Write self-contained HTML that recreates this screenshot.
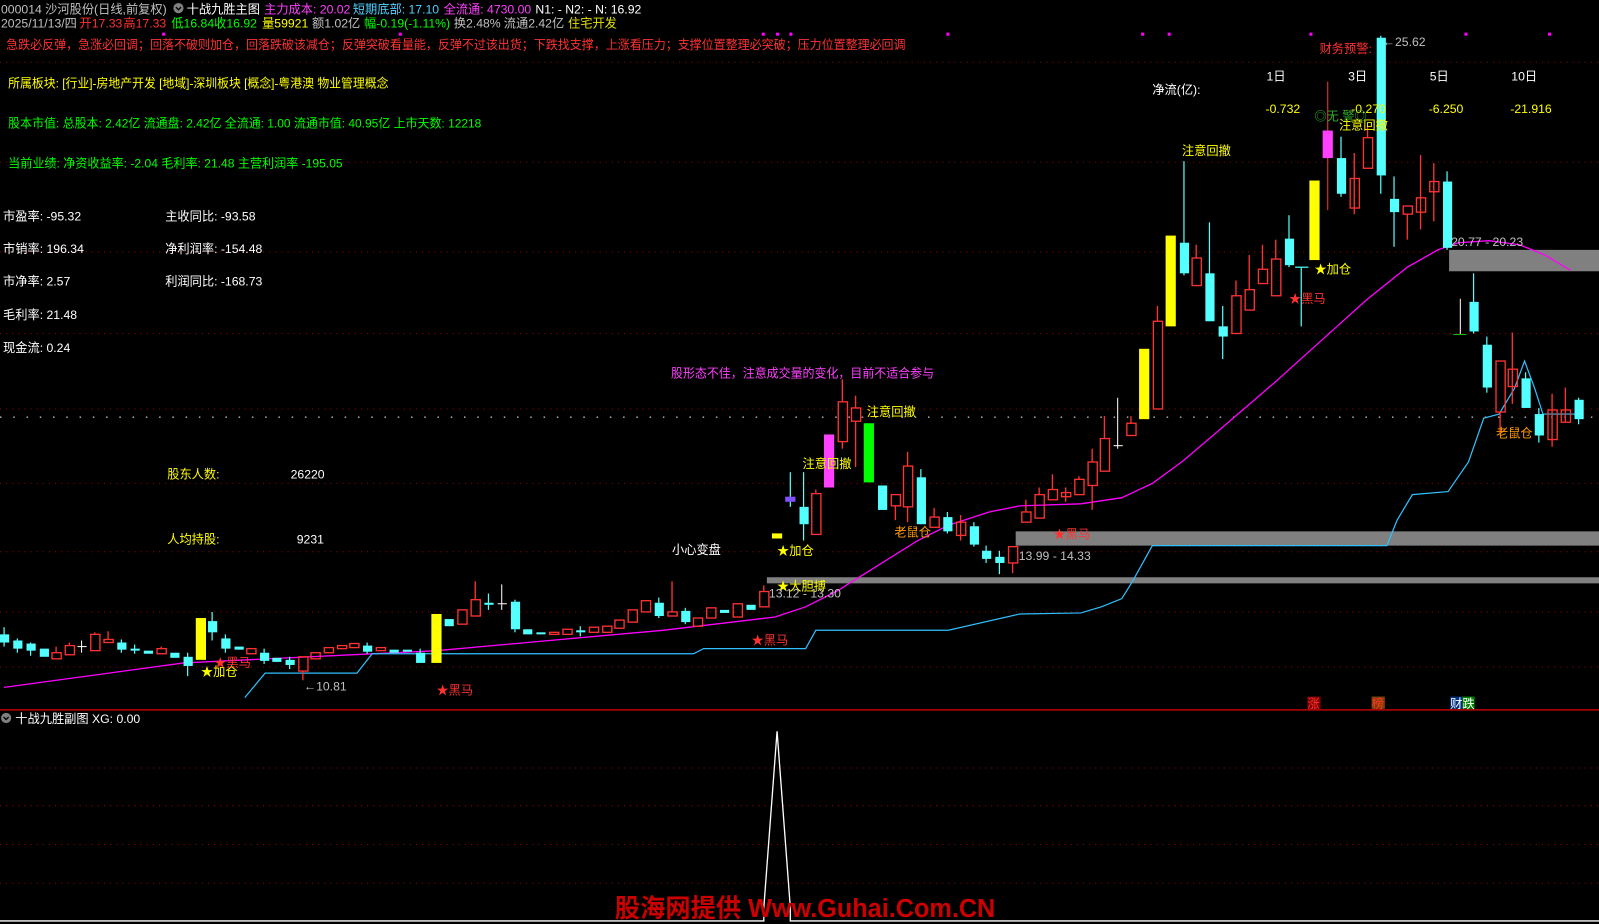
<!DOCTYPE html>
<html><head><meta charset="utf-8"><style>
html,body{margin:0;padding:0;background:#000;overflow:hidden}
svg{display:block}
text{font-family:"Liberation Sans","Noto Sans CJK SC","WenQuanYi Zen Hei",sans-serif;font-size:12px}
.w{fill:#fff}.g{fill:#c0c0c0}.r{fill:#ff3232}.y{fill:#ffff00}.m{fill:#ff40ff}.c{fill:#50d0ff}.gr{fill:#00ff00}.o{fill:#ff9900}
.rc line,.rc rect{stroke:#ff3232;fill:none;stroke-width:1.3}
.cc line{stroke:#54ffff;stroke-width:1.2}.cc rect{fill:#54ffff}
</style></head><body>
<svg width="1599" height="924" viewBox="0 0 1568 906" preserveAspectRatio="none" xmlns="http://www.w3.org/2000/svg">
<rect width="1568" height="906" fill="#000"/>
<g stroke="#a00000" stroke-dasharray="1 5" stroke-width="1">
<line x1="0" y1="61" x2="1568" y2="61"/><line x1="0" y1="159" x2="1568" y2="159"/><line x1="0" y1="247" x2="1568" y2="247"/><line x1="0" y1="327" x2="1568" y2="327"/><line x1="0" y1="401" x2="1568" y2="401"/><line x1="0" y1="474" x2="1568" y2="474"/><line x1="0" y1="541" x2="1568" y2="541"/><line x1="0" y1="600" x2="1568" y2="600"/><line x1="0" y1="654" x2="1568" y2="654"/>
<line x1="0" y1="753" x2="1568" y2="753"/><line x1="0" y1="790" x2="1568" y2="790"/><line x1="0" y1="828" x2="1568" y2="828"/><line x1="0" y1="866" x2="1568" y2="866"/>
</g>
<line x1="0" y1="409" x2="1568" y2="409" stroke="#fff" stroke-dasharray="1.5 11.5"/>
<line x1="0" y1="696" x2="1568" y2="696" stroke="#c00000" stroke-width="1.5"/>
<g fill="#808080"><rect x="1421" y="245" width="147" height="21"/><rect x="996" y="521" width="572" height="14"/><rect x="752" y="566" width="816" height="6"/></g>
<g fill="#ff00ff"><rect x="159" y="32" width="3" height="3"/><rect x="391" y="32" width="3" height="3"/><rect x="747" y="32" width="3" height="3"/><rect x="761" y="32" width="3" height="3"/><rect x="774" y="32" width="3" height="3"/><rect x="928" y="32" width="3" height="3"/><rect x="1119" y="32" width="3" height="3"/><rect x="1145" y="32" width="3" height="3"/><rect x="1284" y="32" width="3" height="3"/><rect x="1436" y="32" width="3" height="3"/><rect x="1518" y="32" width="3" height="3"/></g>
<polyline fill="none" stroke="#ff00ff" stroke-width="1.3" points="4,674 180,650 428,638 650,618 760,605 790,595 820,580 860,555 900,530 930,515 970,502 1000,496 1060,494 1100,488 1130,474 1160,452 1200,418 1250,375 1300,330 1340,294 1380,262 1410,245 1430,238 1460,236 1490,240 1515,250 1540,265"/>
<polyline fill="none" stroke="#30c0ff" stroke-width="1.2" points="240,684 260,660 350,660 365,641 680,641 690,636 790,636 800,618 930,618 1000,602 1060,601 1080,595 1100,587 1110,571 1130,535 1360,535 1370,510 1385,485 1420,482 1440,453 1455,410 1470,406 1485,381 1495,354 1505,381 1513,406 1550,406"/>
<g class="cc">
<line x1="4" y1="615" x2="4" y2="634"/><rect x="0" y="622" width="9" height="8"/>
<line x1="17" y1="626" x2="17" y2="640"/><rect x="13" y="628" width="9" height="8"/>
<line x1="30" y1="630" x2="30" y2="643"/><rect x="26" y="631" width="9" height="7"/>
<rect x="39" y="636" width="9" height="8"/>
<line x1="119" y1="627" x2="119" y2="640"/><rect x="115" y="630" width="9" height="7"/>
<line x1="132" y1="632" x2="132" y2="641"/><rect x="128" y="636" width="9" height="2"/>
<rect x="141" y="638" width="9" height="3"/>
<rect x="167" y="640" width="9" height="5"/>
<line x1="184" y1="640" x2="184" y2="663"/><rect x="180" y="644" width="9" height="9"/>
<line x1="208" y1="600" x2="208" y2="628"/><rect x="204" y="609" width="9" height="11"/>
<line x1="221" y1="622" x2="221" y2="640"/><rect x="217" y="626" width="9" height="10"/>
<rect x="230" y="634" width="9" height="3"/>
<line x1="259" y1="636" x2="259" y2="651"/><rect x="255" y="640" width="9" height="8"/>
<rect x="267" y="645" width="9" height="4"/>
<line x1="284" y1="644" x2="284" y2="656"/><rect x="280" y="647" width="9" height="5"/>
<line x1="360" y1="630" x2="360" y2="641"/><rect x="356" y="633" width="9" height="6"/>
<rect x="382" y="637" width="9" height="3"/>
<rect x="395" y="637" width="9" height="2"/>
<line x1="412" y1="636" x2="412" y2="650"/><rect x="408" y="640" width="9" height="10"/>
<rect x="436" y="607" width="9" height="7"/>
<line x1="479" y1="582" x2="479" y2="598"/><rect x="475" y="591" width="9" height="2"/>
<line x1="505" y1="588" x2="505" y2="620"/><rect x="501" y="590" width="9" height="27"/>
<rect x="513" y="617" width="9" height="5"/>
<rect x="526" y="620" width="9" height="2"/>
<line x1="569" y1="614" x2="569" y2="624"/><rect x="565" y="618" width="9" height="2"/>
<line x1="646" y1="586" x2="646" y2="606"/><rect x="642" y="591" width="9" height="13"/>
<line x1="672" y1="596" x2="672" y2="612"/><rect x="668" y="599" width="9" height="11"/>
<rect x="706" y="598" width="9" height="3"/>
<rect x="732" y="593" width="9" height="5"/>
<line x1="788" y1="463" x2="788" y2="530"/><rect x="784" y="497" width="9" height="17"/>
<line x1="775" y1="463" x2="775" y2="497"/>
<rect x="861" y="476" width="9" height="24"/>
<line x1="903" y1="460" x2="903" y2="514"/><rect x="899" y="468" width="9" height="46"/>
<line x1="929" y1="502" x2="929" y2="523"/><rect x="925" y="507" width="9" height="14"/>
<line x1="955" y1="512" x2="955" y2="536"/><rect x="951" y="516" width="9" height="18"/>
<line x1="967" y1="535" x2="967" y2="552"/><rect x="963" y="540" width="9" height="8"/>
<line x1="980" y1="540" x2="980" y2="563"/><rect x="976" y="546" width="9" height="6"/>
<line x1="1161" y1="158" x2="1161" y2="270"/><rect x="1157" y="238" width="9" height="30"/>
<line x1="1186" y1="218" x2="1186" y2="315"/><rect x="1182" y="268" width="9" height="47"/>
<line x1="1199" y1="300" x2="1199" y2="352"/><rect x="1195" y="320" width="9" height="10"/>
<line x1="1264" y1="211" x2="1264" y2="262"/><rect x="1260" y="234" width="9" height="26"/>
<line x1="1276" y1="262" x2="1276" y2="320"/><line x1="1270" y1="262" x2="1283" y2="262"/>
<line x1="1315" y1="134" x2="1315" y2="193"/><rect x="1311" y="155" width="9" height="35"/>
<line x1="1354" y1="35" x2="1354" y2="190"/><rect x="1350" y="37" width="9" height="135"/>
<line x1="1367" y1="173" x2="1367" y2="242"/><rect x="1363" y="195" width="9" height="13"/>
<line x1="1419" y1="168" x2="1419" y2="245"/><rect x="1415" y="178" width="9" height="65"/>
<line x1="1445" y1="268" x2="1445" y2="327"/><rect x="1441" y="296" width="9" height="29"/>
<line x1="1458" y1="330" x2="1458" y2="385"/><rect x="1454" y="338" width="9" height="42"/>
<line x1="1496" y1="365" x2="1496" y2="400"/><rect x="1492" y="371" width="9" height="29"/>
<line x1="1509" y1="400" x2="1509" y2="434"/><rect x="1505" y="406" width="9" height="21"/>
<line x1="1548" y1="390" x2="1548" y2="416"/><rect x="1544" y="392" width="9" height="19"/>
</g>
<g class="rc">
<line x1="55" y1="634" x2="55" y2="640"/><rect x="51" y="640" width="9" height="6"/>
<line x1="68" y1="630" x2="68" y2="633"/><rect x="64" y="633" width="9" height="9"/>
<line x1="93" y1="620" x2="93" y2="622"/><rect x="89" y="622" width="9" height="16"/>
<line x1="106" y1="619" x2="106" y2="627"/><rect x="102" y="627" width="9" height="3"/>
<line x1="158" y1="634" x2="158" y2="636"/><rect x="154" y="636" width="9" height="5"/>
<rect x="242" y="636" width="9" height="5"/>
<line x1="297" y1="658" x2="297" y2="667"/><rect x="293" y="644" width="9" height="14"/>
<rect x="305" y="640" width="9" height="6"/><rect x="318" y="635" width="9" height="5"/><rect x="331" y="633" width="9" height="3"/><rect x="343" y="631" width="9" height="4"/><rect x="369" y="635" width="9" height="3"/>
<rect x="449" y="598" width="9" height="14"/>
<line x1="466" y1="570" x2="466" y2="588"/><rect x="462" y="588" width="9" height="16"/>
<rect x="539" y="620" width="9" height="2"/><rect x="552" y="617" width="9" height="5"/><rect x="578" y="615" width="9" height="5"/><rect x="591" y="614" width="9" height="6"/><rect x="603" y="608" width="9" height="8"/><rect x="616" y="598" width="9" height="12"/><rect x="629" y="589" width="9" height="11"/>
<line x1="659" y1="570" x2="659" y2="600"/><rect x="655" y="600" width="9" height="4"/>
<rect x="680" y="606" width="9" height="8"/><rect x="693" y="596" width="9" height="10"/><rect x="719" y="592" width="9" height="13"/>
<line x1="749" y1="574" x2="749" y2="580"/><rect x="745" y="580" width="9" height="15"/>
<line x1="800" y1="480" x2="800" y2="484"/><rect x="796" y="484" width="9" height="40"/>
<line x1="826" y1="372" x2="826" y2="394"/><line x1="826" y1="433" x2="826" y2="440"/><rect x="822" y="394" width="9" height="39"/>
<line x1="839" y1="388" x2="839" y2="400"/><line x1="839" y1="413" x2="839" y2="458"/><rect x="835" y="400" width="9" height="13"/>
<line x1="878" y1="496" x2="878" y2="510"/><rect x="874" y="485" width="9" height="11"/>
<line x1="890" y1="443" x2="890" y2="457"/><line x1="890" y1="497" x2="890" y2="512"/><rect x="886" y="457" width="9" height="40"/>
<line x1="916" y1="498" x2="916" y2="507"/><rect x="912" y="507" width="9" height="10"/>
<line x1="942" y1="505" x2="942" y2="530"/><rect x="938" y="512" width="9" height="13"/>
<line x1="993" y1="552" x2="993" y2="562"/><rect x="989" y="536" width="9" height="16"/>
<line x1="1006" y1="490" x2="1006" y2="502"/><rect x="1002" y="502" width="9" height="10"/>
<line x1="1019" y1="478" x2="1019" y2="485"/><rect x="1015" y="485" width="9" height="23"/>
<line x1="1032" y1="465" x2="1032" y2="480"/><rect x="1028" y="480" width="9" height="10"/>
<line x1="1045" y1="478" x2="1045" y2="492"/><rect x="1041" y="483" width="9" height="4"/>
<line x1="1058" y1="467" x2="1058" y2="470"/><rect x="1054" y="470" width="9" height="15"/>
<line x1="1071" y1="440" x2="1071" y2="453"/><line x1="1071" y1="476" x2="1071" y2="500"/><rect x="1067" y="453" width="9" height="23"/>
<line x1="1083" y1="408" x2="1083" y2="430"/><rect x="1079" y="430" width="9" height="32"/>
<line x1="1109" y1="408" x2="1109" y2="415"/><rect x="1105" y="415" width="9" height="12"/>
<line x1="1135" y1="300" x2="1135" y2="315"/><rect x="1131" y="315" width="9" height="86"/>
<line x1="1173" y1="240" x2="1173" y2="253"/><rect x="1169" y="253" width="9" height="27"/>
<line x1="1212" y1="275" x2="1212" y2="290"/><rect x="1208" y="290" width="9" height="37"/>
<line x1="1225" y1="250" x2="1225" y2="284"/><rect x="1221" y="284" width="9" height="20"/>
<line x1="1238" y1="240" x2="1238" y2="264"/><rect x="1234" y="264" width="9" height="14"/>
<line x1="1251" y1="235" x2="1251" y2="254"/><rect x="1247" y="254" width="9" height="36"/>
<line x1="1328" y1="150" x2="1328" y2="210"/><rect x="1324" y="175" width="9" height="29"/>
<line x1="1341" y1="123" x2="1341" y2="135"/><rect x="1337" y="135" width="9" height="30"/>
<line x1="1380" y1="210" x2="1380" y2="235"/><rect x="1376" y="202" width="9" height="8"/>
<line x1="1393" y1="152" x2="1393" y2="225"/><rect x="1389" y="194" width="9" height="14"/>
<line x1="1406" y1="160" x2="1406" y2="217"/><rect x="1402" y="178" width="9" height="10"/>
<line x1="1471" y1="404" x2="1471" y2="425"/><rect x="1467" y="354" width="9" height="50"/>
<line x1="1483" y1="326" x2="1483" y2="396"/><rect x="1479" y="362" width="9" height="17"/>
<line x1="1522" y1="386" x2="1522" y2="438"/><rect x="1518" y="402" width="9" height="29"/>
<line x1="1535" y1="380" x2="1535" y2="414"/><rect x="1531" y="402" width="9" height="12"/>
</g>
<rect x="192" y="606" width="10" height="41" fill="#ffff00"/>
<rect x="423" y="602" width="10" height="48" fill="#ffff00"/>
<rect x="757" y="523" width="10" height="5" fill="#ffff00"/>
<rect x="770" y="487" width="10" height="5" fill="#8050ff"/>
<rect x="808" y="426" width="10" height="52" fill="#ff40ff"/>
<rect x="847" y="415" width="10" height="58" fill="#00ff00"/>
<rect x="1117" y="342" width="10" height="69" fill="#ffff00"/>
<rect x="1143" y="231" width="10" height="89" fill="#ffff00"/>
<rect x="1284" y="177" width="10" height="78" fill="#ffff00"/>
<line x1="1302" y1="80" x2="1302" y2="206" stroke="#ff3232"/><rect x="1297" y="128" width="10" height="27" fill="#ff40ff"/>
<g stroke="#fff"><line x1="80" y1="628" x2="80" y2="640"/><line x1="76" y1="634" x2="85" y2="634"/><line x1="492" y1="573" x2="492" y2="598"/><line x1="488" y1="592" x2="497" y2="592"/><line x1="1096" y1="390" x2="1096" y2="440"/><line x1="1092" y1="437" x2="1101" y2="437"/><line x1="1432" y1="293" x2="1432" y2="328"/></g>
<line x1="1425" y1="328" x2="1438" y2="328" stroke="#00c000"/>
<polyline fill="none" stroke="#fff" stroke-width="1.3" points="0,903 749,903 749,890 762,717 775,890 775,903 1568,903"/>
<text x="1" y="13" class="g">000014 沙河股份(日线,前复权)</text>
<circle cx="175" cy="8" r="5" fill="#808080"/><path d="M172.5 7 L175 9.5 L177.5 7" stroke="#000" fill="none" stroke-width="1.3"/>
<text x="183" y="13" class="w">十战九胜主图</text>
<text x="259" y="13" class="m">主力成本: 20.02</text>
<text x="346" y="13" class="c">短期底部: 17.10</text>
<text x="435" y="13" class="m">全流通: 4730.00</text>
<text x="525" y="13" class="w">N1: -  N2: -  N: 16.92</text>
<text x="1" y="27" class="g">2025/11/13/四</text>
<text x="78" y="27" class="r">开17.33</text><text x="121" y="27" class="r">高17.33</text>
<text x="168" y="27" class="gr">低16.84</text><text x="210" y="27" class="gr">收16.92</text>
<text x="257" y="27" class="y">量59921</text><text x="306" y="27" class="g">额1.02亿</text>
<text x="357" y="27" class="gr">幅-0.19(-1.11%)</text><text x="445" y="27" class="g">换2.48%</text>
<text x="494" y="27" class="g">流通2.42亿</text><text x="557" y="27" fill="#e0e000">住宅开发</text>
<text x="6" y="48" class="r" textLength="882" lengthAdjust="spacingAndGlyphs">急跌必反弹，急涨必回调；回落不破则加仓，回落跌破该减仓；反弹突破看量能，反弹不过该出货；下跌找支撑，上涨看压力；支撑位置整理必突破；压力位置整理必回调</text>
<text x="8" y="86" class="y" textLength="373" lengthAdjust="spacingAndGlyphs">所属板块: [行业]-房地产开发 [地域]-深圳板块 [概念]-粤港澳 物业管理概念</text>
<text x="8" y="125" class="gr" textLength="464" lengthAdjust="spacingAndGlyphs">股本市值: 总股本: 2.42亿 流通盘: 2.42亿 全流通: 1.00 流通市值: 40.95亿 上市天数: 12218</text>
<text x="8" y="164" class="gr" textLength="328" lengthAdjust="spacingAndGlyphs">当前业绩: 净资收益率: -2.04 毛利率: 21.48 主营利润率 -195.05</text>
<text x="3" y="216" class="w">市盈率: -95.32</text><text x="162" y="216" class="w">主收同比: -93.58</text>
<text x="3" y="248" class="w">市销率: 196.34</text><text x="162" y="248" class="w">净利润率: -154.48</text>
<text x="3" y="280" class="w">市净率: 2.57</text><text x="162" y="280" class="w">利润同比: -168.73</text>
<text x="3" y="313" class="w">毛利率: 21.48</text>
<text x="3" y="345" class="w">现金流: 0.24</text>
<text x="164" y="469" class="y">股东人数:</text><text x="285" y="469" class="w">26220</text>
<text x="164" y="533" class="y">人均持股:</text><text x="291" y="533" class="w">9231</text>
<text x="659" y="543" class="w">小心变盘</text>
<text x="658" y="370" class="m" textLength="258" lengthAdjust="spacingAndGlyphs">股形态不佳，注意成交量的变化，目前不适合参与</text>
<text x="1130" y="92" class="w">净流(亿):</text>
<text x="1242" y="79" class="w">1日</text><text x="1322" y="79" class="w">3日</text><text x="1402" y="79" class="w">5日</text><text x="1482" y="79" class="w">10日</text>
<text x="1241" y="111" class="y">-0.732</text><text x="1325" y="111" class="y">-0.270</text><text x="1401" y="111" class="y">-6.250</text><text x="1481" y="111" class="y">-21.916</text>
<text x="1294" y="52" class="r">财务预警:</text>
<text x="1356" y="45" class="g">←25.62</text>
<text x="1289" y="118" fill="#30b030">◎无 警◎</text>
<text x="1313" y="127" class="y">注意回撤</text><text x="1159" y="152" class="y">注意回撤</text>
<text x="850" y="408" class="y">注意回撤</text><text x="787" y="459" class="y">注意回撤</text>
<text x="877" y="526" class="o">老鼠仓</text><text x="1467" y="429" class="o">老鼠仓</text>
<text x="197" y="663" class="y">★加仓</text><text x="762" y="544" class="y">★加仓</text><text x="1289" y="268" class="y">★加仓</text>
<text x="762" y="579" class="y">★大胆搏</text>
<text x="210" y="654" class="r">★黑马</text><text x="428" y="681" class="r">★黑马</text><text x="737" y="632" class="r">★黑马</text><text x="1033" y="528" class="r">★黑马</text><text x="1264" y="297" class="r">★黑马</text>
<text x="1423" y="241" class="g">20.77 - 20.23</text>
<text x="999" y="549" class="g">13.99 - 14.33</text>
<text x="754" y="586" class="g">13.12 - 13.30</text>
<text x="298" y="677" class="g">←10.81</text>
<rect x="1282" y="683" width="13" height="12" fill="#800000"/><text x="1282" y="694" class="r">涨</text>
<rect x="1345" y="683" width="13" height="12" fill="#804000"/><text x="1345" y="694" class="r">榜</text>
<rect x="1422" y="683" width="12" height="12" fill="#003080"/><rect x="1434" y="683" width="12" height="12" fill="#008000"/><text x="1422" y="694" class="w">财跌</text>
<circle cx="6" cy="704" r="5" fill="#808080"/><path d="M3.5 703 L6 705.5 L8.5 703" stroke="#000" fill="none" stroke-width="1.3"/>
<text x="15" y="709" class="w">十战九胜副图  XG: 0.00</text>
<text x="603" y="899" fill="#cc0000" style="font-size:25px;font-weight:bold" textLength="373" lengthAdjust="spacingAndGlyphs">股海网提供 Www.Guhai.Com.CN</text>
</svg>
</body></html>
